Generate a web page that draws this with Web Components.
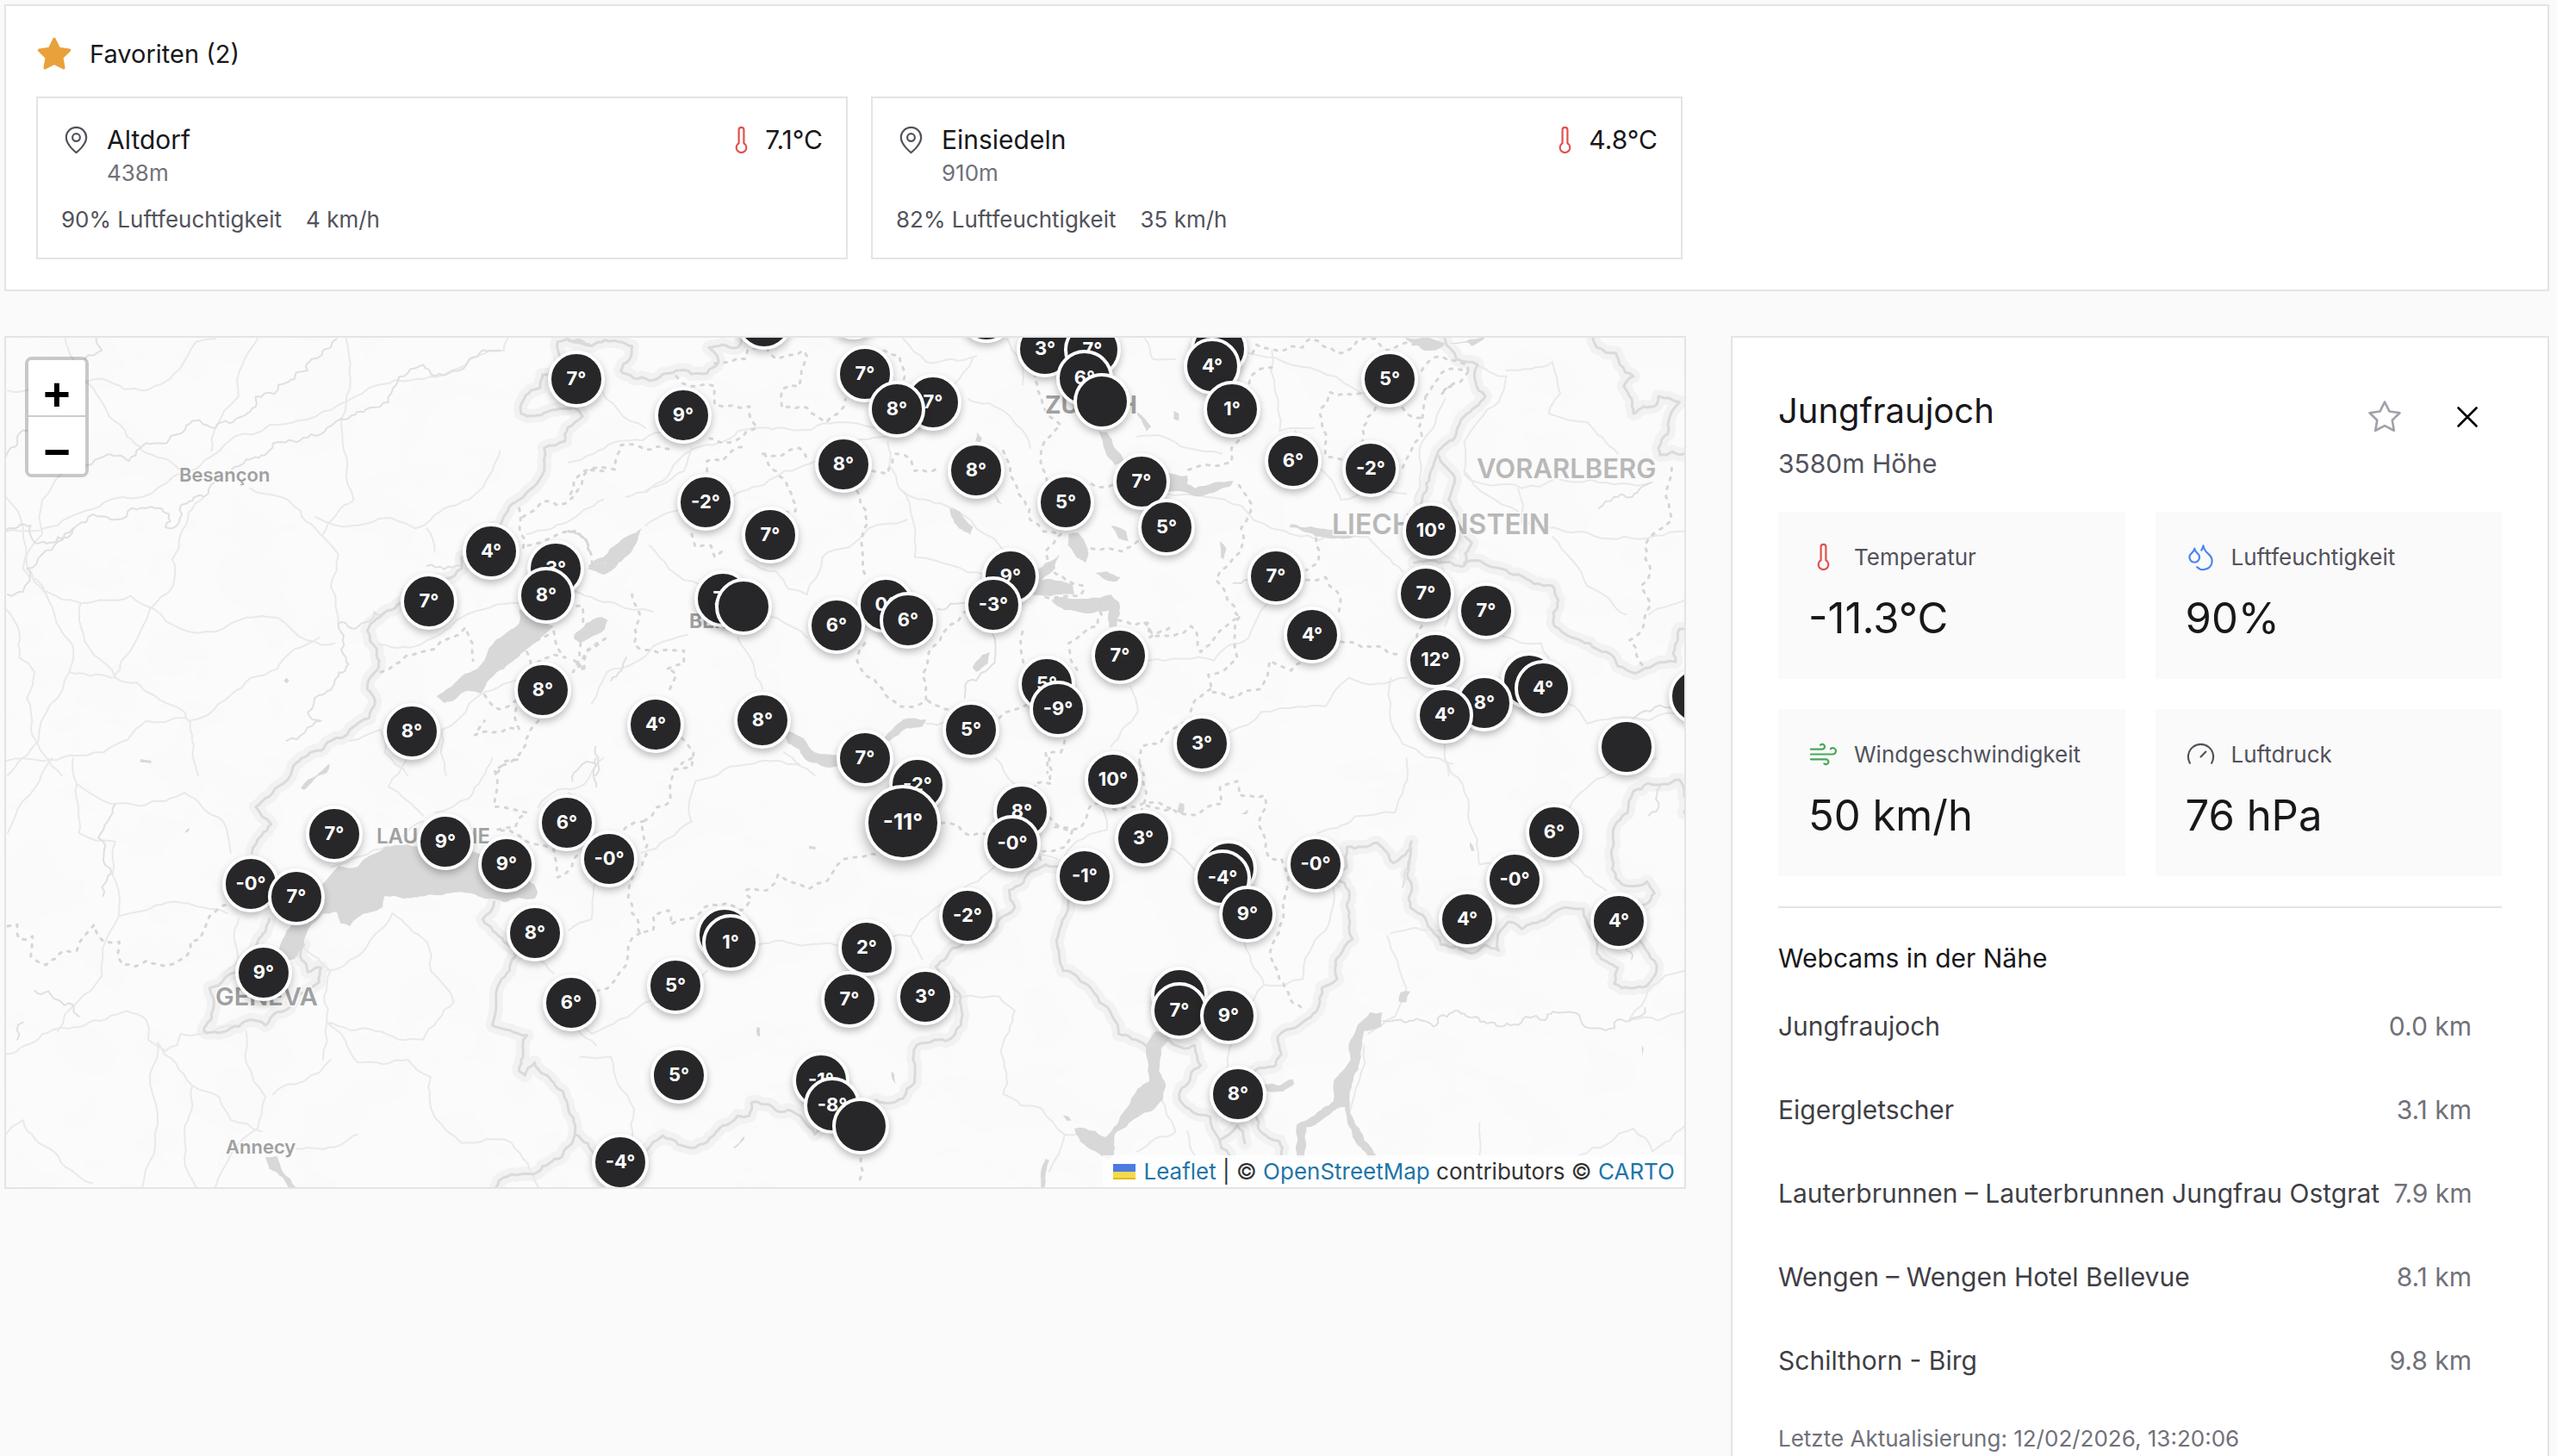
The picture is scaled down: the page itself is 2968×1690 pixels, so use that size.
<!DOCTYPE html>
<html lang="de">
<head>
<meta charset="utf-8">
<title>Wetterstationen</title>
<style>
  html { height: 100%; overflow: hidden; }
  body {
    margin: 0;
    height: 100%;
    overflow: hidden;
    background: #fafafa;
    color: #18181b;
    font-family: Inter, "Liberation Sans", sans-serif;
    font-size: 29px;
    line-height: 42px;
    --line: #e4e4e4;
    --ink: #18181b;
    --soft: #52525b;
    --mute: #71717a;
  }
</style>
</head>
<body>
<weather-page>
  <favorites-panel slot="favorites" count="2">
    <favorite-card name="Altdorf" altitude="438m" temperature="7.1°C" humidity="90% Luftfeuchtigkeit" wind="4 km/h"></favorite-card>
    <favorite-card name="Einsiedeln" altitude="910m" temperature="4.8°C" humidity="82% Luftfeuchtigkeit" wind="35 km/h"></favorite-card>
  </favorites-panel>
  <station-map slot="map"></station-map>
  <station-detail slot="detail" name="Jungfraujoch" altitude="3580m Höhe" updated="Letzte Aktualisierung: 12/02/2026, 13:20:06">
    <metric-tile slot="metrics" icon="thermometer" label="Temperatur" value="-11.3°C"></metric-tile>
    <metric-tile slot="metrics" icon="droplets" label="Luftfeuchtigkeit" value="90%"></metric-tile>
    <metric-tile slot="metrics" icon="wind" label="Windgeschwindigkeit" value="50 km/h"></metric-tile>
    <metric-tile slot="metrics" icon="gauge" label="Luftdruck" value="76 hPa"></metric-tile>
    <webcam-link slot="webcams" distance="0.0 km">Jungfraujoch</webcam-link>
    <webcam-link slot="webcams" distance="3.1 km">Eigergletscher</webcam-link>
    <webcam-link slot="webcams" distance="7.9 km">Lauterbrunnen – Lauterbrunnen Jungfrau Ostgrat</webcam-link>
    <webcam-link slot="webcams" distance="8.1 km">Wengen – Wengen Hotel Bellevue</webcam-link>
    <webcam-link slot="webcams" distance="9.8 km">Schilthorn - Birg</webcam-link>
  </station-detail>
</weather-page>

<script>
const ICONS = {
  star: '<path d="M12 2l3.09 6.26L22 9.27l-5 4.87 1.18 6.88L12 17.77l-6.18 3.25L7 14.14 2 9.27l6.91-1.01L12 2z"/>',
  pin: '<path d="M20 10c0 6-8 12-8 12s-8-6-8-12a8 8 0 0 1 16 0Z"/><circle cx="12" cy="10" r="3"/>',
  thermometer: '<path d="M14 4v10.54a4 4 0 1 1-4 0V4a2 2 0 0 1 4 0Z"/>',
  droplets: '<path d="M7 16.3c2.2 0 4-1.83 4-4.05 0-1.16-.57-2.26-1.71-3.19S7.29 6.75 7 5.3c-.29 1.45-1.14 2.84-2.29 3.76S3 11.1 3 12.25c0 2.22 1.8 4.05 4 4.05z"/><path d="M12.56 6.6A10.97 10.97 0 0 0 14 3.02c.5 2.5 2 4.9 4 6.5s3 3.5 3 5.5a6.98 6.98 0 0 1-11.91 4.97"/>',
  wind: '<path d="M17.7 7.7a2.5 2.5 0 1 1 1.8 4.3H2"/><path d="M9.6 4.6A2 2 0 1 1 11 8H2"/><path d="M12.6 19.4A2 2 0 1 0 14 16H2"/>',
  gauge: '<path d="m12 14 4-4"/><path d="M3.34 19a10 10 0 1 1 17.32 0"/>',
  close: '<path d="M18 6 6 18"/><path d="m6 6 12 12"/>'
};
const ICON_COLORS = { thermometer: '#e0514c', droplets: '#4b83f0', wind: '#46a758', gauge: '#52525b' };

class Base extends HTMLElement {
  connectedCallback() {
    if (this.shadowRoot) return;
    this.attachShadow({ mode: 'open' }).innerHTML =
      '<style>*{box-sizing:border-box}:host{box-sizing:border-box}' + this.css() + '</style>' + this.html();
  }
  a(n) { return this.getAttribute(n) || ''; }
  css() { return ''; }
  html() { return ''; }
}

customElements.define('ui-icon', class extends Base {
  css() { return `
    :host { display: block; flex: none; width: 35px; height: 35px; }
    :host([size="large"]) { width: 42px; height: 42px; }
    svg { display: block; width: 100%; height: 100%; fill: none; stroke: currentColor; stroke-width: 1.5; stroke-linecap: round; stroke-linejoin: round; }
    :host([filled]) svg { fill: currentColor; stroke-width: 2; }`; }
  html() { return `<svg viewBox="0 0 24 24" aria-hidden="true">${ICONS[this.a('name')]}</svg>`; }
});

customElements.define('weather-page', class extends Base {
  css() { return `
    :host { display: flex; flex-direction: column; gap: 52px; padding: 5px 9px 0 5px; }
    .main { display: grid; grid-template-columns: repeat(3, minmax(0, 1fr)); gap: 52px; align-items: start; }
    .map { grid-column: span 2; }`; }
  html() { return `
    <slot name="favorites"></slot>
    <div class="main">
      <div class="map"><slot name="map"></slot></div>
      <slot name="detail"></slot>
    </div>`; }
});

customElements.define('favorites-panel', class extends Base {
  css() { return `
    :host { display: block; background: #fff; border: 2px solid var(--line); padding: 35px; }
    h2 { display: flex; align-items: center; gap: 20px; margin: 0 0 28px; font-size: 29px; line-height: 42px; font-weight: 400; }
    ui-icon { color: #e9a13b; }
    .grid { display: grid; grid-template-columns: repeat(3, minmax(0, 1fr)); gap: 27px; }`; }
  html() { return `
    <h2><ui-icon name="star" size="large" filled></ui-icon>Favoriten (${this.a('count')})</h2>
    <div class="grid"><slot></slot></div>`; }
});

customElements.define('favorite-card', class extends Base {
  css() { return `
    :host { display: block; border: 2px solid var(--line); padding: 27px; background: #fff; }
    .top { display: flex; justify-content: space-between; align-items: flex-start; }
    .place, .temp { display: flex; align-items: center; gap: 18px; font-size: 30px; line-height: 42px; }
    .temp { gap: 10px; }
    .place ui-icon { color: var(--soft); }
    .temp ui-icon { color: #e0514c; }
    .alt { margin-left: 53px; font-size: 26px; line-height: 35px; color: var(--mute); }
    .facts { display: flex; gap: 28px; margin-top: 19px; font-size: 26px; line-height: 35px; color: var(--soft); }`; }
  html() { return `
    <div class="top">
      <div class="place"><ui-icon name="pin"></ui-icon><span>${this.a('name')}</span></div>
      <div class="temp"><ui-icon name="thermometer"></ui-icon><span>${this.a('temperature')}</span></div>
    </div>
    <div class="alt">${this.a('altitude')}</div>
    <div class="facts"><span>${this.a('humidity')}</span><span>${this.a('wind')}</span></div>`; }
});

customElements.define('metric-tile', class extends Base {
  css() { return `
    :host { display: flex; flex-direction: column; gap: 19px; padding: 35px; background: #fafafa; }
    .label { display: flex; align-items: center; gap: 18px; font-size: 26px; line-height: 35px; color: var(--soft); }
    .value { font-size: 49px; line-height: 70px; color: var(--ink); white-space: nowrap; }`; }
  html() { const i = this.a('icon'); return `
    <div class="label"><ui-icon name="${i}" style="color:${ICON_COLORS[i]}"></ui-icon><span>${this.a('label')}</span></div>
    <div class="value">${this.a('value')}</div>`; }
});

customElements.define('webcam-link', class extends Base {
  css() { return `
    :host { display: block; }
    a { display: flex; justify-content: space-between; align-items: center; gap: 16px; padding: 27px 35px 28px 0; font-size: 30px; line-height: 42px; color: #3f3f46; text-decoration: none; white-space: nowrap; }
    .km { color: var(--mute); }`; }
  html() { return `<a href="#"><span><slot></slot></span><span class="km">${this.a('distance')}</span></a>`; }
});

customElements.define('station-detail', class extends Base {
  css() { return `
    :host { display: block; background: #fff; border: 2px solid var(--line); padding: 53px; }
    header { display: flex; justify-content: space-between; align-items: flex-start; margin-bottom: 35px; }
    h2 { margin: 0 0 9px; font-size: 40px; line-height: 63px; font-weight: 400; }
    .alt { margin: 0; font-size: 30px; line-height: 42px; color: var(--soft); }
    .actions { display: flex; gap: 16px; }
    button { display: flex; align-items: center; justify-content: center; width: 80px; height: 77px; padding: 0; border: 0; background: none; color: #000; }
    button.fav { color: #a1a1aa; }
    .tiles { display: grid; grid-template-columns: repeat(2, minmax(0, 1fr)); gap: 35px; }
    .cams { margin-top: 35px; padding-top: 35px; border-top: 2px solid var(--line); }
    h3 { margin: 0 0 8px; font-size: 30px; line-height: 46px; font-weight: 400; }
    .updated { margin: 24px 0 0; font-size: 26px; line-height: 35px; color: var(--mute); }`; }
  html() { return `
    <header>
      <div><h2>${this.a('name')}</h2><p class="alt">${this.a('altitude')}</p></div>
      <div class="actions">
        <button class="fav" aria-label="Favorit"><ui-icon name="star" size="large"></ui-icon></button>
        <button aria-label="Schliessen"><ui-icon name="close" size="large"></ui-icon></button>
      </div>
    </header>
    <div class="tiles"><slot name="metrics"></slot></div>
    <section class="cams">
      <h3>Webcams in der Nähe</h3>
      <slot name="webcams"></slot>
    </section>
    <p class="updated">${this.a('updated')}</p>`; }
});

customElements.define('map-marker', class extends Base {
  css() { return `
    :host { position: absolute; width: 66px; height: 66px; margin: -33px 0 0 -33px; display: flex; align-items: center; justify-content: center;
      border-radius: 50%; border: 4px solid #fff; background: #27272a; color: #fff; font-size: 22px; line-height: 24px; font-weight: 700; box-shadow: 0 4px 8px rgba(0,0,0,.25); padding-bottom: 2px; }
    :host([selected]) { width: 88px; height: 88px; margin: -44px 0 0 -44px; font-size: 26px; box-shadow: 0 5px 16px rgba(0,0,0,.35); }`; }
  html() { return '<slot></slot>'; }
});

const SHEETS = { a: [0, 380], b: [660, 380], c: [1320, 380], d: [0, 880], e: [660, 880], f: [1320, 880] };
const LAKES = [
  'd 725,690 745,600 800,540 845,430 880,375 930,378 1000,310 1060,300 1150,320 1240,330 1320,370 1390,440 1398,465 1390,490 1310,502 1270,490 1200,466 1120,475 1050,490 1000,480 995,520 930,555 910,585 885,575 875,535 840,540 810,580 790,650 765,700 740,710',
  'a 1350,980 1440,1040 1400,1090 1370,1120 1310,1190 1250,1275 1215,1265 1155,1308 1135,1285 1200,1215 1240,1190 1270,1120 1320,1060 1350,1030',
  'b 14,1070 45,1030 85,1008 102,1020 95,1050 50,1085 28,1098 14,1085',
  'b 190,700 180,740 130,820 90,862 75,850 100,815 70,848 50,830 90,800 130,750',
  'd 782,105 800,75 858,20 850,50 790,110', 'd 365,3 393,8 393,18 365,14',
  'd 690,1390 720,1385 735,1440 755,1465 770,1496 750,1496 735,1460 700,1430',
  'b 820,1430 870,1365 930,1365 920,1390 880,1395 835,1440',
  'b 560,1400 610,1430 640,1480 700,1490 710,1520 670,1532 620,1510 600,1470 570,1450',
  'b 990,630 1015,640 1052,695 1045,722 1015,700 995,660', 'b 1062,365 1075,385 1070,400 1058,395', 'b 1105,580 1128,615 1115,610',
  'b 1378,360 1400,365 1420,420 1445,470 1420,480 1395,430', 'c 50,515 130,515 130,545 150,560 200,540 250,535 240,555 200,575 150,588 110,570 60,570',
  'b 1475,290 1500,320 1515,345 1503,362 1488,320', 'c 95,290 108,300 108,325 95,320',
  'b 1300,720 1325,715 1352,790 1345,820 1320,800 1298,760', 'b 1410,690 1450,710 1455,745 1430,735',
  'b 1275,790 1265,840 1230,880 1280,882 1310,895 1315,930 1270,930 1200,925 1205,870 1240,820',
  'b 1255,950 1290,940 1350,945 1410,930 1430,955 1425,1040 1405,1045 1405,985 1340,995 1290,985',
  'b 1095,1130 1090,1170 1060,1200 1050,1185 1075,1140', 'b 1370,855 1400,850 1435,870 1425,885 1390,875',
  'c 400,685 500,705 570,728 500,735 430,710 395,695',
  'c 695,34 905,34 890,50 870,65 860,52 800,55 775,80 745,80 715,55', 'c 215,745 232,770 225,808 217,800',
  'e 1528,950 1568,970 1540,1010 1535,1090 1553,1140 1545,1190 1480,1250 1420,1310 1408,1400 1330,1335 1315,1290 1370,1300 1395,1320 1450,1220 1480,1150 1510,1125 1505,1050 1500,1000',
  'f 605,885 637,885 635,935 590,950 582,1040 575,1085 552,1190 560,1250 590,1330 625,1390 600,1390 560,1320 540,1215 520,1220 480,1260 440,1285 435,1390 415,1390 415,1275 460,1245 510,1195 512,1120 540,1080 555,1050 555,980 572,930',
  'f 330,1135 370,1140 405,1118 408,1135 380,1160 335,1158', 'f 685,815 710,812 700,850 680,848',
  'e 1240,1395 1250,1400 1240,1450 1238,1496 1228,1496 1228,1440', 'e 490,935 497,940 497,970 490,965', 'e 840,1090 847,1100 850,1135 842,1120', 'e 428,1355 455,1318 458,1322 432,1358',
  'f 110,155 122,160 118,195 104,185', 'f 865,290 877,320 870,325', 'f 1312,1000 1317,1010 1313,1035', 'f 270,195 290,178 285,195',
  'd 480,260 493,242 490,255', 'a 738,1230 745,1220 752,1230 745,1240', 'e 625,305 642,308 642,318 625,316', 'e 1285,1243 1300,1248 1307,1262 1295,1262', 'a 1528,840 1570,800 1570,860 1550,850'
];
const BORDERS = [
  'a 1568,50 1510,55 1475,40 1450,50 1455,100 1470,160 1410,165 1405,210 1380,220 1355,300 1490,280 1515,310 1475,350 1470,395 1415,420 1415,500 1350,600 1320,640 1300,690 1200,800 1200,840 1110,885 1010,985 955,1055 980,1120 975,1200 955,1260 975,1300 960,1360 910,1400 860,1440 800,1490 755,1560',
  'd 755,60 735,90 665,170 705,230 680,270 655,330',
  'd 700,560 670,640 620,740 545,800 555,870 530,950 600,940 640,915 690,930 740,880 830,780 835,730 800,745 780,690 790,650',
  'd 1285,500 1255,560 1310,640 1340,690 1300,780 1290,850 1280,930 1370,965 1360,1040 1350,1090 1365,1105 1390,1060 1440,1130 1475,1200 1490,1250 1495,1310 1460,1390 1400,1440 1350,1450 1310,1460 1290,1494',
  'e 17,1310 70,1390 200,1370 245,1315 330,1355 400,1280 440,1245 470,1245 475,1200 510,1205 570,1225 610,1260 640,1310 720,1240 800,1190 870,1185 900,1130 905,1000 980,985 1020,930 1020,860 990,780 955,725 1000,660 1060,640 1120,560 1160,520 1145,460 1210,390 1275,375 1300,480 1295,540 1270,650 1285,740 1350,790 1380,850 1430,960 1500,1000 1530,1000',
  'f 50,975 85,985 120,1010 150,1000 165,1070 115,1150 110,1190 190,1250 210,1320 240,1383',
  'f 215,1330 260,1280 275,1300 280,1340', 'f 310,1250 315,1290 370,1335 375,1380',
  'f 270,1230 290,1100 360,1070 375,1030 365,970 410,940 470,870 480,800 520,770 525,690 560,630 550,550 550,460 520,420 545,380 545,310 625,295 665,365 713,290 710,520 750,560 790,650 870,680 905,650 940,670 945,600 965,570 1000,595 1110,520 1160,525 1190,600 1195,680 1250,730 1240,785 1260,800 1330,785 1350,740 1330,680 1290,620 1260,560 1320,510 1345,470 1325,430 1280,445 1245,420 1235,350 1240,240 1275,190 1290,115 1370,90 1410,75 1422,190',
  'c 800,40 830,110 885,130 880,190 905,240 850,310 830,370 780,440 825,540 810,600 830,680 870,750 850,830 720,820',
  'c 780,440 760,520 735,620', 'c 850,820 905,825 990,860 1080,900 1095,950 1085,1040 1130,1080 1220,1130 1250,1180 1295,1205 1400,1165 1410,1050 1424,1050',
  'c 1185,40 1195,70 1245,90 1255,130 1290,170 1265,205 1290,300 1350,270 1355,240 1410,260 1385,310 1380,370 1355,420 1360,445 1424,440',
  'b 0,45 60,65 130,50 165,65 135,150 210,185 280,150 360,160 390,120 365,70 400,60 440,70 450,40'
];
const CANTONS = [
  'b 5,580 40,500 120,495 135,410 200,425 265,425', 'b 280,170 320,205 380,205 380,270 470,275 490,350 440,390 350,385', 'b 360,500 360,465 400,465 460,415',
  'b 505,440 600,420 620,460', 'b 510,440 570,560 590,640 540,660', 'b 750,570 775,640 765,720 765,830 775,870', 'b 770,1100 750,1160 765,1200 860,1320 930,1300 920,1210 940,1120 1030,990',
  'b 935,1300 990,1330', 'b 380,125 460,110 465,80 520,60', 'b 510,40 540,110 610,80 620,100 600,205 555,215 555,280 620,280 670,330 700,300 720,250', 'b 820,80 860,100 870,190',
  'b 1220,130 1220,220 1250,310 1280,340 1230,420 1245,540', 'b 1130,430 1160,540 1200,670 1280,720', 'b 790,500 830,510 850,440 890,460 900,500 960,490', 'b 1280,720 1240,780 1250,830 1340,900 1330,935 1225,935',
  'b 1430,1020 1510,1030 1510,1080 1568,1040', 'b 1180,1060 1185,1180', 'b 1380,960 1375,1040 1300,1100 1330,1210', 'b 165,930 185,1000 170,1100 300,1125 300,1170 255,1190 280,1210 260,1280',
  'b 320,720 330,765 370,760 380,800 410,770', 'b 15,1160 40,1200 45,1130 100,1080', 'b 295,1430 325,1480 320,1530 275,1540', 'b 1120,1360 1190,1315', 'b 1290,1440 1280,1480 1240,1480 1245,1550',
  'b 1360,545 1420,545', 'b 1360,770 1440,780 1490,740', 'b 0,710 50,750 60,790',
  'a 990,1200 1130,1120 1210,1045 1230,1160', 'a 1350,630 1360,770 1420,740 1495,710', 'a 1360,660 1410,605 1450,620 1490,590 1530,495 1568,500', 'a 1370,1130 1380,1170 1440,1140 1470,1150 1440,1060 1395,1090',
  'a 1260,1280 1300,1330 1340,1300 1350,1400 1235,1420 1260,1370', 'a 1400,1370 1340,1500 1280,1560', 'a 1500,970 1515,970 1515,1040', 'a 1490,710 1530,760 1540,830', 'a 1510,1100 1490,1200 1530,1120 1568,1090',
  'd 20,585 45,580 50,630 85,620 80,690 120,720 170,670 200,670 245,580 270,640 310,640 320,720 440,720 490,680 495,640 520,630 545,550 590,510',
  'd 1345,5 1285,40 1285,170 1340,180 1370,190 1340,240 1290,250 1350,270 1440,320 1450,415 1480,390 1510,330',
  'e 195,220 150,240 130,265', 'e 320,0 275,40 265,150 230,170 195,220 205,300 160,430 165,540 185,610 220,600 220,550 260,530 265,580 310,560 370,510 450,530 475,490 460,460 515,460 545,405 625,455 700,370 740,345 800,335',
  'e 185,610 155,650 150,720 75,810', 'e 970,225 1045,270 1090,265', 'e 760,1395 765,1440 755,1490', 'e 1250,0 1255,90 1210,90 1260,220 1310,250 1290,310 1230,325 1230,370', 'e 1265,240 1330,245 1360,160 1420,180 1568,178',
  'e 1485,20 1490,180', 'f 25,165 155,198 220,160 215,100 260,80 265,130 330,130 335,170 315,230 345,350 375,350 390,450 380,560 350,650 370,770 440,880',
  'c 300,90 310,60 430,70 450,40 520,90 570,50 620,40 650,80 720,60', 'c 350,140 295,170 290,200', 'c 740,150 790,100 860,130 860,150', 'c 750,240 790,160 860,155 840,190 790,235 830,200',
  'c 580,230 500,225 475,300 490,370 490,450 530,460', 'c 620,280 585,350 585,400', 'c 690,280 720,315 745,315', 'c 750,240 740,380 690,490', 'c 280,370 245,420 245,470 120,495',
  'c 265,550 295,640 270,700 270,780 205,880 265,1010 165,1130 140,1040 40,1075 10,1020', 'c 265,1010 260,1150 185,1210 195,1270 240,1290 320,1260 345,1160 400,1195 430,1165',
  'c 190,1260 145,1310 140,1370 70,1420 60,1450 10,1460 5,1540', 'c 530,1095 640,1115 690,1145', 'c 465,735 470,820 440,845', 'c 440,880 490,870 520,920 520,1010', 'c 740,1040 725,1090',
  'c 1390,490 1375,590 1390,670 1320,760 1335,850 1310,900 1335,960 1280,1090 1325,1190'
];
const RIVERS = [
  'a 225,480 270,450 335,465 365,420 440,390 500,325 560,350 630,310 665,240 750,190 800,150 810,110 860,70 875,40', 'a 15,710 80,690 90,750 150,730 200,690 290,670 380,630 440,650 430,695 465,680 470,620 530,590 600,500 640,460 700,430 770,400 850,350 900,320 960,280 1010,260 1030,200 1060,160 1100,130 1130,170 1220,110 1300,80',
  'a 220,110 265,80 250,40', 'a 20,930 60,920 70,840 110,790 190,700', 'a 15,450 50,370 70,360', 'a 1110,830 1200,830', 'a 1010,985 880,1030 900,1150 830,1280 800,1340 835,1370 745,1440',
  'd 300,160 280,220 270,340 290,400 265,450 268,480', 'd 205,900 90,810', 'd 45,980 60,920', 'b 1100,1060 1110,1110 1030,1290', 'b 110,1230 150,1150', 'b 70,1560 70,1460', 'e 10,80 70,20', 'e 70,0 72,100',
  'c 1200,630 1240,590 1300,575 1335,540', 'f 690,450 710,340', 'f 1330,200 1360,100', 'f 1270,660 1285,700', 'c 250,890 290,880', 'f 640,915 700,920 770,935 880,900 1010,900 1110,885 1250,910 1320,870', 'c 1270,1370 1320,1335 1424,1335', 'b 1030,960 960,980'
];
const ROADS = [
  'a 170,40 190,110 250,230 330,380 370,430 470,500', 'a 20,220 140,240 270,180 380,220 470,140 510,50 560,40', 'a 15,590 60,700 70,830 120,930 190,1110 180,1200 100,1440 20,1560', 'a 15,710 150,690 270,610 370,590 450,520 560,440 610,380 700,340 800,320 880,270 960,210 1100,180 1240,100 1310,80 1320,40',
  'a 550,430 560,350 620,240 630,130 670,40', 'a 160,510 110,600 110,720 60,840 120,930', 'a 120,920 210,960 340,935 400,980 470,1050 560,1060 640,1010 720,1010 800,1090 870,1100', 'a 530,590 470,720 450,900 390,980 350,1100 295,1220',
  'a 650,560 730,590 820,700 880,790 860,900 880,1040', 'a 820,660 920,690 1050,680 1080,700 1120,670 1220,600 1280,500 1300,430', 'a 900,40 900,270 890,370 920,600 840,720', 'a 210,960 210,1040 300,1220 400,1280 480,1340 500,1420 515,1560', 'a 180,1200 290,1220', 'a 490,1370 540,1350 600,1280 720,1190 830,1080',
  'a 15,980 50,1060 50,1150 90,1200 70,1290 80,1400 160,1560', 'a 15,1510 110,1510 180,1490 270,1480 380,1370 480,1360', 'a 1110,700 1130,780', 'a 985,1105 1110,1090 1200,1010 1350,960', 'a 1160,1560 1150,1400 1220,1310 1340,1230 1430,1190', 'a 910,1440 990,1400 1000,1480 1060,1560',
  'a 1370,720 1568,600', 'd 15,1030 110,960 220,930 330,880 380,910 385,980 430,1020 460,1000 470,960 600,930', 'd 410,990 390,1100 410,1240 400,1380 370,1494', 'd 410,990 500,1140 570,1180 600,1260 680,1300', 'd 640,950 640,1060 690,1180 670,1290 600,1380 560,1494',
  'd 850,920 930,1060 1060,1050 1120,1110 1130,1250 1200,1340 1330,1340 1400,1494', 'd 790,660 860,740 850,920 840,1050', 'd 850,740 930,690 1020,540 1110,640 1120,740 1180,850 1100,980 850,920', 'd 620,560 620,700 580,760', 'd 15,1310 60,1260 140,1370 240,1480', 'd 710,1170 860,1050', 'd 200,90 290,160 430,150 480,120 580,220 600,330', 'd 190,0 200,90 205,260 300,290 310,520 150,950', 'd 310,550 420,510 530,520 590,540',
  'd 20,260 110,50 135,0', 'd 500,1140 480,1280 510,1494', 'd 770,1360 830,1360 930,1310', 'd 1100,200 1010,100 1060,0', 'd 1130,190 1220,140 1280,0', 'd 860,380 970,320 1100,220', 'd 1390,690 1440,750', 'd 1400,170 1450,110 1520,90 1568,0', 'd 1500,940 1550,1000',
  'b 150,590 250,530 330,420 560,350 700,330 800,350 870,380', 'b 200,690 330,610 450,570 560,500 650,460 760,390 830,380 900,300 1000,200 1050,110', 'b 210,760 260,840 300,880 460,990 540,1010 620,1080', 'b 440,1080 480,1170 505,1260', 'b 870,570 980,620 1060,700 1140,790 1220,840', 'b 830,400 860,560 900,800 1000,830 1080,860', 'b 460,810 540,850 570,910 620,930 660,800 780,700 880,670',
  'b 0,910 120,960 220,990', 'b 60,1310 100,1200 220,1110 310,1070', 'b 1040,250 1140,300 1200,420', 'b 870,40 930,120 1060,100', 'b 80,190 130,290 200,350', 'b 0,470 120,400 260,360', 'b 560,1480 640,1560', 'b 930,1380 1040,1350', 'b 1460,1250 1480,1340 1410,1460', 'b 1400,400 1500,560', 'b 1140,40 1180,200', 'b 320,420 300,500 200,570',
  'c 20,40 40,110 100,110', 'c 290,90 470,150 560,210 640,270', 'c 350,80 370,360 460,350', 'c 50,570 180,590 270,620 350,700 600,730 690,850', 'c 800,250 740,400 720,600 790,820 800,1040', 'c 880,130 960,170 940,260 850,400 850,500 990,640', 'c 960,150 1080,120 1100,230 1070,300 1170,330 1250,440', 'c 850,510 1000,560 1180,530 1340,540', 'c 990,560 1000,680 1110,710 1424,710',
  'c 1080,730 1170,900 1270,1000', 'c 340,960 290,1080 200,1160 30,1160', 'c 240,1410 420,1320 490,1320 550,1220 700,1220', 'c 660,1220 690,1450 820,1520', 'c 800,1440 810,1560', 'c 950,1075 1050,1100 1070,1150', 'c 1120,1310 1170,1380 1240,1360 1424,1340', 'c 0,380 130,420 220,440', 'c 410,360 530,600 700,580', 'c 1330,1000 1424,950',
  'e 0,120 90,340 60,560 0,600', 'e 190,330 320,220 330,80 480,20 600,20', 'e 1030,450 1150,340 1270,350', 'e 490,650 620,650 770,650 890,620 1030,460', 'e 0,900 60,960 200,850 360,740', 'e 30,1040 110,1040 130,1140 170,1220 165,1330', 'e 1000,830 1120,830 1160,880 1130,1170 1230,1220 1290,1310 1250,1440', 'e 1290,1310 1370,1300', 'e 1110,0 1160,90', 'e 890,620 920,700', 'e 1390,180 1400,250 1290,340',
  'f 70,310 150,390', 'f 280,620 330,790 240,1010 230,1090', 'f 330,790 430,770 490,600 510,450', 'f 470,260 670,190 700,0', 'f 800,0 860,200 890,370 930,370', 'f 1120,190 1230,50 1350,0', 'f 1120,340 1220,460', 'f 660,610 790,600', 'f 650,620 700,800 670,900 600,960', 'f 550,1240 590,1000', 'f 1424,740 1330,800 1280,910 1424,880', 'f 890,1270 890,1383', 'f 1150,1383 1290,1290 1340,1370 1424,1280', 'f 60,1180 100,1300 0,1370', 'f 130,1300 150,1383'
];
const LABELS = [
  ['Besançon', 208, 559, 22, 600, '#a0a0a0'], ['ZURICH', 1213, 480, 28, 700, '#a0a0a0'], ['BERN', 800, 729, 23, 700, '#a0a0a0'],
  ['VORARLBERG', 1714, 555, 31, 600, '#b8b8b8'], ['LIECHTENSTEIN', 1546, 620, 32, 600, '#b8b8b8'],
  ['LAUSANNE', 437, 979, 24, 600, '#a0a0a0'], ['GENEVA', 250, 1167, 29, 600, '#a0a0a0'], ['Annecy', 262, 1339, 22, 600, '#a0a0a0']
];
/* Later entries lie over earlier ones. */
const MARKERS = [
  ['',887,373],['',991,361],['',1145,365],['3°',1213,405],['7°',1268,406],['6°',1259,439],['',1279,466],['',1415,405],['4°',1407,425],['5°',1613,440],['7°',669,440],['9°',793,482],['7°',1004,434],['7°',1083,467],['8°',1041,475],['1°',1430,475],
  ['8°',979,539],['6°',1501,535],['8°',1133,546],['-2°',1591,544],['7°',1325,559],['-2°',819,583],['5°',1237,583],['5°',1354,612],['10°',1661,616],['7°',894,621],['4°',570,640],['3°',645,660],['8°',634,691],['7°',498,698],
  ['9°',1173,669],['-3°',1153,702],['7°',1481,669],['7°',1655,689],['7°',839,695],['',863,704],['0°',1028,702],['6°',1054,720],['6°',971,726],['7°',1725,709],['4°',1523,737],['7°',1300,761],['12°',1666,766],
  ['5°',1215,794],['-9°',1228,823],['8°',630,801],['',1775,790],['4°',1791,799],['',1970,808],['8°',1723,816],['4°',1677,830],['8°',885,836],['4°',761,841],['5°',1127,847],['8°',478,849],['3°',1395,863],['',1888,867],
  ['7°',1004,880],['10°',1292,905],['-2°',1065,911],['8°',1186,942],['-0°',1175,979],['6°',658,955],['6°',1804,966],['7°',388,968],['3°',1327,973],['9°',517,977],['-0°',707,997],['9°',588,1003],['-0°',1527,1003],['',1426,1008],['-4°',1419,1019],
  ['-1°',1259,1017],['-0°',1758,1021],['-0°',291,1026],['7°',344,1041],['9°',1448,1061],['-2°',1123,1063],['4°',1703,1067],['4°',1879,1069],['8°',621,1083],['',841,1085],['1°',848,1094],['2°',1006,1100],['9°',306,1129],['5°',784,1144],
  ['',1369,1155],['7°',1369,1173],['9°',1426,1179],['3°',1074,1157],['7°',986,1160],['6°',663,1164],['5°',788,1248],['-1°',953,1254],['8°',1437,1270],['-8°',966,1283],['',999,1307],['-4°',720,1349],['-11°',1048,955,'selected']
];

let seed = 7;
const rnd = () => ((seed = (seed * 16807) % 2147483647) / 2147483647) - 0.5;
function parse(line) {
  const [sheet, ...pts] = line.split(' ');
  const [ox, oy] = SHEETS[sheet];
  return pts.map(p => { const [x, y] = p.split(',').map(Number); return [ox + x / 2.24, oy + y / 3]; });
}
/* Midpoint displacement gives coastlines and roads their natural wobble. */
function rough(a, b, k, min, out) {
  const dx = b[0] - a[0], dy = b[1] - a[1], len = Math.hypot(dx, dy);
  if (len < min) { out.push(b); return; }
  const r = rnd() * k, m = [(a[0] + b[0]) / 2 - dy * r, (a[1] + b[1]) / 2 + dx * r];
  rough(a, m, k, min, out); rough(m, b, k, min, out);
}
function trace(line, k, min, closed) {
  const p = parse(line);
  if (closed) p.push(p[0]);
  const out = [p[0]];
  for (let i = 1; i < p.length; i++) rough(p[i - 1], p[i], k, min, out);
  return 'M' + out.map(q => q[0].toFixed(1) + ' ' + q[1].toFixed(1)).join('L') + (closed ? 'Z' : '');
}
const layer = (lines, k, min, closed) => lines.map(l => trace(l, k, min, closed)).join('');

customElements.define('station-map', class extends Base {
  css() { return `
    :host { display: block; position: relative; height: 990px; border: 2px solid var(--line); background: #fbfbfb; overflow: hidden; }
    .base { position: absolute; inset: 0; width: 100%; height: 100%; }
    .base path { fill: none; stroke-linejoin: round; stroke-linecap: round; }
    .base text { font-family: Inter, "Liberation Sans", sans-serif; paint-order: stroke; stroke: #fbfbfb; stroke-width: 3; }
    .zoom { position: absolute; left: 22px; top: 22px; display: flex; flex-direction: column; border: 4px solid rgba(0,0,0,.2); border-radius: 8px; background-clip: padding-box; }
    .zoom button { width: 66px; height: 66px; padding: 24px 0 0; border: 0; background: #fff; color: #000; font: 700 54px/40px "Liberation Mono", monospace; }
    .zoom button:first-child { border-bottom: 2px solid #ccc; border-radius: 4px 4px 0 0; }
    .zoom button:last-child { border-radius: 0 0 4px 4px; }
    .credit { position: absolute; right: 0; bottom: 0; display: flex; align-items: center; gap: 9px; padding: 0 11px 0 12px; background: rgba(255,255,255,.8); font-size: 26px; line-height: 37px; color: #333; white-space: nowrap; }
    .credit svg { width: 26px; height: 18px; }
    .credit a { color: #1f75a9; text-decoration: none; }`; }
  html() {
    const borders = layer(BORDERS, 0.3, 7);
    return `
    <svg class="base" viewBox="7 392 1948 986" preserveAspectRatio="xMidYMid slice" aria-hidden="true">
      <filter id="relief" x="0" y="0" width="100%" height="100%">
        <feTurbulence type="fractalNoise" baseFrequency=".012 .016" numOctaves="5" seed="4"/>
        <feColorMatrix values="0 0 0 0 .955  0 0 0 0 .955  0 0 0 0 .955  0 7 0 0 -3.5"/>
      </filter>
      <rect x="7" y="392" width="1948" height="986" filter="url(#relief)"/>
      <path d="${borders}" stroke="#f2f2f2" style="stroke-width:16"/>
      <path d="${layer(ROADS, 0.22, 12)}" stroke="#e9e9e9" style="stroke-width:2"/>
      <path d="${layer(RIVERS, 0.5, 7)}" stroke="#e0e0e0" style="stroke-width:2"/>
      <path d="${layer(LAKES, 0.2, 7, true)}" style="fill:#d8d8d8"/>
      <path d="${layer(CANTONS, 0.3, 12)}" stroke="#d6d6d6" style="stroke-width:3;stroke-dasharray:3 8"/>
      <path d="${borders}" stroke="#dadada" style="stroke-width:3"/>
      ${LABELS.map(([t, x, y, s, w, c]) => `<text x="${x}" y="${y}" font-size="${s}" font-weight="${w}" fill="${c}">${t}</text>`).join('')}
    </svg>
    ${MARKERS.map(([t, x, y, s]) => `<map-marker ${s || ''} style="left:${x - 7}px;top:${y - 392}px">${t}</map-marker>`).join('')}
    <div class="zoom"><button aria-label="Vergrössern">+</button><button aria-label="Verkleinern">−</button></div>
    <div class="credit">
      <svg viewBox="0 0 12 8" preserveAspectRatio="none" aria-hidden="true"><path fill="#4c7be1" d="M0 0h12v4H0z"/><path fill="#f7d84b" d="M0 4h12v3H0z"/><path fill="#e0bc00" d="M0 7h12v1H0z"/></svg>
      <span><a href="#">Leaflet</a> | © <a href="#">OpenStreetMap</a> contributors © <a href="#">CARTO</a></span>
    </div>`;
  }
});
</script>
</body>
</html>
